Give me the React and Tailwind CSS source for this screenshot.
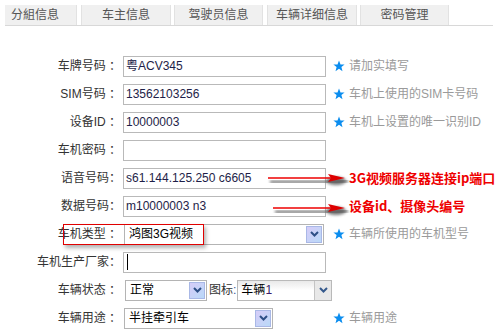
import React from "react";

const FONT = { fontFamily: '"Liberation Sans", "Noto Sans CJK SC", sans-serif' };

const Star = () => (
  <svg width="12" height="12" viewBox="0 0 12 12" className="shrink-0">
    <polygon
      points="6,0.5 7.5,4.4 11.6,4.5 8.4,7 9.5,11.3 6,8.8 2.5,11.3 3.6,7 0.4,4.5 4.5,4.4"
      fill="#0b8def"
    />
  </svg>
);

const Chevron = ({ color = "#2d4f86" }) => (
  <svg width="9" height="6" viewBox="0 0 9 6">
    <path d="M1 1 L4.5 4.5 L8 1" fill="none" stroke={color} strokeWidth="2" />
  </svg>
);

const Hint = ({ text }) => (
  <div className="flex items-center gap-[4px] text-[12px] text-[#9a9a9a]">
    <Star />
    <span>{text}</span>
  </div>
);

const TextBox = ({ value, cursor }) => (
  <div className="flex h-[21px] w-[203px] items-center border border-[#b9b9b9] bg-white pl-[2px] text-[12px] text-[#1e1e48]">
    {cursor && <span className="ml-[1px] h-[16px] w-[1px] bg-black" />}
    {value}
  </div>
);

// lavender dropdown button, IE style
const Select = ({ value, width }) => (
  <div
    className={`flex h-[21px] items-center justify-between border border-[#b4b4b4] bg-white pl-[4px] text-[12px] text-black ${width}`}
  >
    <span>{value}</span>
    <span className="mr-[1px] flex h-[17px] w-[16px] items-center justify-center border border-[#a9b8e6] bg-gradient-to-br from-[#d6ccf8] to-[#b9d9f8]">
      <Chevron />
    </span>
  </div>
);

const Row = ({ label, children, hint, note }) => (
  <div className="flex h-[28px] items-center">
    <div className="w-[123px] shrink-0 pr-[2px] text-right text-[12px] text-[#333]">{label}</div>
    <div className="flex w-[210px] shrink-0 items-center">{children}</div>
    {hint && <Hint text={hint} />}
    {note && (
      <div
        className="pl-[16px] text-[13px] font-bold text-[#ee0000]"
        style={{ fontFamily: '"Noto Sans CJK SC", serif' }}
      >
        {note}
      </div>
    )}
  </div>
);

const tabs = [
  { name: "分組信息", cls: "w-[72px] pl-[6px]" },
  { name: "车主信息", cls: "ml-[4px] w-[90px] justify-center border-l border-[#cfcfcf]" },
  { name: "驾驶员信息", cls: "ml-[3px] w-[89px] justify-center border-l border-[#cfcfcf]" },
  { name: "车辆详细信息", cls: "ml-[4px] w-[90px] justify-center border-l border-[#cfcfcf]" },
  { name: "密码管理", cls: "ml-[3px] w-[89px] justify-center border-l border-[#cfcfcf]" },
];

const Arrow = ({ y, x0 }) => (
  <g>
    <path
      d={`M${x0 + 2} ${y + 4} L76 ${y + 4} L86 ${y + 3}`}
      stroke="#7a7a7a"
      strokeWidth="4"
      fill="none"
      filter="url(#blur)"
      opacity="0.8"
    />
    <ellipse cx="74" cy={y + 3} rx="10" ry="4" fill="#555" filter="url(#blur)" opacity="0.8" />
    <line x1={x0} y1={y} x2="70" y2={y} stroke="#ee0000" strokeWidth="1.5" />
    <polygon points={`66,${y - 4} 83,${y} 66,${y + 4} 69,${y}`} fill="#dd0000" />
  </g>
);

export default function App() {
  return (
    <div className="relative h-[336px] w-[496px] overflow-hidden bg-white" style={FONT}>
      {/* tab strip */}
      <div className="ml-[5px] mr-[3px] mt-[5px] flex h-[21px] border-b border-[#d8d8d8]">
        {tabs.map((t) => (
          <div
            key={t.name}
            className={`flex h-[20px] items-center border-r border-[#e2e2e2] bg-[#f0f0f0] text-[12px] text-[#555] ${t.cls}`}
          >
            {t.name}
          </div>
        ))}
      </div>

      <div className="mt-[26px]">
        <Row label="车牌号码 ：" hint="请加实填写">
          <TextBox value="粤ACV345" />
        </Row>
        <Row label="SIM号码 ：" hint="车机上使用的SIM卡号码">
          <TextBox value="13562103256" />
        </Row>
        <Row label="设备ID ：" hint="车机上设置的唯一识别ID">
          <TextBox value="10000003" />
        </Row>
        <Row label="车机密码 ：">
          <TextBox value="" />
        </Row>
        <Row label="语音号码：" note="3G视频服务器连接ip端口">
          <TextBox value="s61.144.125.250 c6605" />
        </Row>
        <Row label="数据号码：" note="设备id、摄像头编号">
          <TextBox value="m10000003  n3" />
        </Row>
        <Row label="车机类型 ：" hint="车辆所使用的车机型号">
          <Select value="鸿图3G视频" width="w-[200px] ml-[1px]" />
        </Row>
        <Row label="车机生产厂家：">
          <TextBox value="" cursor />
        </Row>
        <Row label="车辆状态 ：">
          <Select value="正常" width="w-[82px] ml-[2px]" />
          <span className="ml-[2px] text-[12px] text-[#333]">
            图标<span className="text-[#3a5a9a]">:</span>
          </span>
          <div className="ml-[1px] flex h-[21px] w-[95px] shrink-0 items-center border border-[#b9b9b9] bg-gradient-to-b from-[#e9e9e9] via-white to-white text-[12px] text-black">
            <span className="flex-1 pl-[3px]">
              车辆<span className="text-[#3a1a6a]">1</span>
            </span>
            <span className="flex h-[19px] w-[17px] items-center justify-center border-l border-[#c4c4c4] bg-[#e8e8e8]">
              <Chevron color="#35598c" />
            </span>
          </div>
        </Row>
        <Row label="车辆用途 ：" hint="车辆用途">
          <Select value="半挂牵引车" width="w-[149px] ml-[1px]" />
        </Row>
      </div>

      {/* annotation overlays */}
      <div className="pointer-events-none absolute left-[63px] top-[224px] h-[21px] w-[141px] border border-[#e00000] shadow-[2px_3px_4px_rgba(0,0,0,0.3)]" />
      <svg className="pointer-events-none absolute left-[262px] top-[168px]" width="90" height="50">
        <defs>
          <filter id="blur" x="-20%" y="-100%" width="140%" height="300%">
            <feGaussianBlur stdDeviation="1.8" />
          </filter>
        </defs>
        <Arrow y={10} x0={6} />
        <Arrow y={40} x0={11} />
      </svg>
    </div>
  );
}
